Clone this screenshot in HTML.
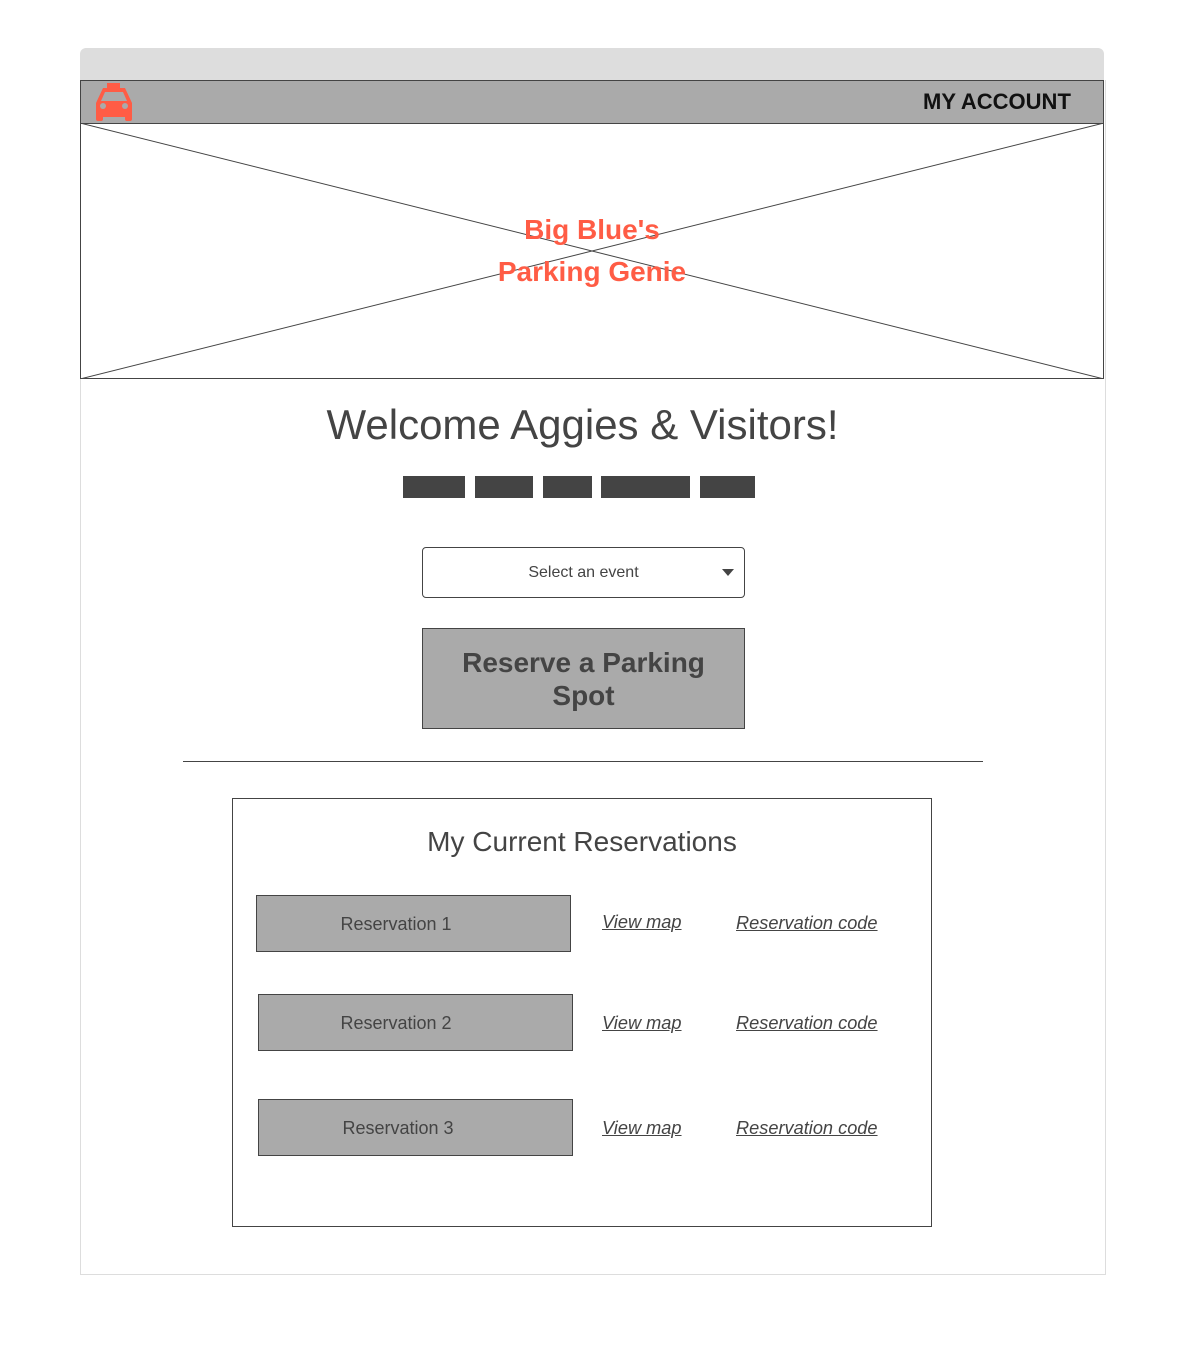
<!DOCTYPE html>
<html><head><meta charset="utf-8"><style>
*{margin:0;padding:0;box-sizing:border-box}
body{width:1184px;height:1353px;background:#fff;font-family:"Liberation Sans",sans-serif;position:relative;overflow:hidden;color:#444}
.a{position:absolute}
.btn{background:#aaa;border:1px solid #444;text-align:center}
.lnk{font-style:italic;text-decoration:underline;font-size:18.2px;color:#444}
</style></head><body>
<div class="a" style="left:80px;top:48px;width:1024px;height:33px;background:#ddd;border-radius:6px 6px 0 0"></div>
<div class="a" style="left:80px;top:80px;width:1026px;height:1195px;border:1px solid #ddd;border-top:none"></div>
<div class="a" style="left:80px;top:80px;width:1024px;height:44px;background:#aaa;border:1px solid #444"></div>
<svg class="a" style="left:94px;top:83px" width="40" height="38" viewBox="0 0 40 38">
<rect x="13" y="0" width="13" height="5" fill="#ff5c45"/>
<path d="M9 5 H31 L38 20 V36 a2 2 0 0 1 -2 2 H33 a2 2 0 0 1 -2 -2 V34 H9 V36 a2 2 0 0 1 -2 2 H4 a2 2 0 0 1 -2 -2 V20 Z" fill="#ff5c45"/>
<path d="M11 9 H29 L33 18 H7 Z" fill="#aaa"/>
<circle cx="9" cy="23" r="3" fill="#aaa"/><circle cx="31" cy="23" r="3" fill="#aaa"/>
</svg>
<div class="a" style="left:923px;top:89px;font-size:22px;font-weight:bold;color:#111">MY ACCOUNT</div>
<svg class="a" style="left:80px;top:123px" width="1024" height="256">
<rect x="0.5" y="0.5" width="1023" height="255" fill="#fff" stroke="#444"/>
<line x1="0" y1="0" x2="1024" y2="256" stroke="#444"/>
<line x1="0" y1="256" x2="1024" y2="0" stroke="#444"/>
</svg>
<div class="a" style="left:80px;top:209px;width:1024px;text-align:center;font-size:28px;font-weight:bold;color:#ff5c45;line-height:42px">Big Blue's<br>Parking Genie</div>
<div class="a" style="left:80px;top:401px;width:1005px;text-align:center;font-size:42px;color:#444">Welcome Aggies &amp; Visitors!</div>
<div class="a" style="left:403px;top:476px;width:62px;height:22px;background:#444"></div>
<div class="a" style="left:475px;top:476px;width:58px;height:22px;background:#444"></div>
<div class="a" style="left:543px;top:476px;width:49px;height:22px;background:#444"></div>
<div class="a" style="left:601px;top:476px;width:89px;height:22px;background:#444"></div>
<div class="a" style="left:700px;top:476px;width:55px;height:22px;background:#444"></div>
<div class="a" style="left:422px;top:547px;width:323px;height:51px;border:1px solid #444;border-radius:4px;text-align:center;line-height:50px;font-size:16px;color:#444">Select an event</div>
<div class="a" style="left:722px;top:569px;width:0;height:0;border-left:6px solid transparent;border-right:6px solid transparent;border-top:7px solid #444"></div>
<div class="a btn" style="left:422px;top:628px;width:323px;height:101px;font-size:28px;font-weight:bold;line-height:33px;padding-top:17px;color:#444">Reserve a Parking<br>Spot</div>
<div class="a" style="left:183px;top:761px;width:800px;height:1px;background:#444"></div>
<div class="a" style="left:232px;top:798px;width:700px;height:429px;border:1px solid #444"></div>
<div class="a" style="left:232px;top:826px;width:700px;text-align:center;font-size:28px;color:#444">My Current Reservations</div>
<div class="a btn" style="left:256px;top:895px;width:315px;height:57px;line-height:56px;font-size:18px;padding-right:35px">Reservation 1</div>
<div class="a btn" style="left:258px;top:994px;width:315px;height:57px;line-height:56px;font-size:18px;padding-right:39px">Reservation 2</div>
<div class="a btn" style="left:258px;top:1099px;width:315px;height:57px;line-height:56px;font-size:18px;padding-right:35px">Reservation 3</div>
<div class="a lnk" style="left:602px;top:912px">View map</div>
<div class="a lnk" style="left:736px;top:913px">Reservation code</div>
<div class="a lnk" style="left:602px;top:1013px">View map</div>
<div class="a lnk" style="left:736px;top:1013px">Reservation code</div>
<div class="a lnk" style="left:602px;top:1118px">View map</div>
<div class="a lnk" style="left:736px;top:1118px">Reservation code</div>
</body></html>
